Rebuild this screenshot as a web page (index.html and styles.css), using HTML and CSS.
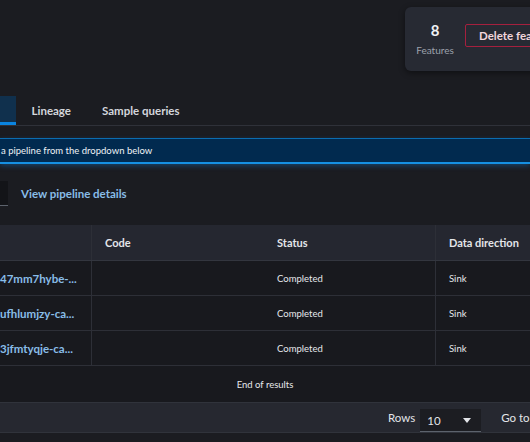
FILE: index.html
```html
<!DOCTYPE html>
<html>
<head>
<meta charset="utf-8">
<link rel="stylesheet" href="styles.css">
</head>
<body>
<div class="page">
  <div class="top">
    <div class="stats">
      <div class="count">
        <div class="num">8</div>
        <div class="lbl">Features</div>
      </div>
      <button class="danger">Delete feature group</button>
    </div>
  </div>

  <div class="tabs">
    <div class="tab active"></div>
    <div class="tab">Lineage</div>
    <div class="tab">Sample queries</div>
  </div>

  <div class="banner"><span>a pipeline from the dropdown below</span></div>

  <div class="picker">
    <div class="select-stub"></div>
    <a class="link">View pipeline details</a>
  </div>

  <div class="table">
    <div class="row head">
      <div class="cell c1"></div>
      <div class="cell c2">Code</div>
      <div class="cell c3">Status</div>
      <div class="cell c4">Data direction</div>
    </div>
    <div class="row">
      <div class="cell c1"><a class="link clip">47mm7hybe-...</a></div>
      <div class="cell c2"></div>
      <div class="cell c3">Completed</div>
      <div class="cell c4">Sink</div>
    </div>
    <div class="row">
      <div class="cell c1"><a class="link clip">ufhlumjzy-ca...</a></div>
      <div class="cell c2"></div>
      <div class="cell c3">Completed</div>
      <div class="cell c4">Sink</div>
    </div>
    <div class="row">
      <div class="cell c1"><a class="link clip">3jfmtyqje-ca...</a></div>
      <div class="cell c2"></div>
      <div class="cell c3">Completed</div>
      <div class="cell c4">Sink</div>
    </div>
    <div class="end">End of results</div>
  </div>

  <div class="footer">
    <span class="rows-label">Rows</span>
    <div class="rows-select"><span>10</span><span class="caret"></span></div>
    <span class="goto">Go to</span>
  </div>
</div>
</body>
</html>
```
FILE: styles.css
```css
* { box-sizing: border-box; }
html, body {
  margin: 0;
  padding: 0;
  background: #1b1c21;
  width: 530px;
  height: 442px;
  overflow: hidden;
}
body {
  font-family: Lato, "Open Sans", "Liberation Sans", sans-serif;
  color: #dfe2e7;
}
.page {
  width: 530px;
}
.top {
  height: 96px;
  padding-top: 7px;
  display: flex;
  justify-content: flex-end;
}
.stats {
  width: 185px;
  flex: none;
  margin-right: -60px;
  height: 64px;
  background: #272a33;
  border-radius: 6px;
  box-shadow: 0 2px 6px rgba(0,0,0,0.45);
  display: flex;
  align-items: center;
  overflow: hidden;
}
.count {
  flex: none;
  width: 60px;
  text-align: center;
  margin-top: -2px;
}
.num {
  font-weight: 700;
  font-size: 15px;
  color: #f0f1f4;
  line-height: 18px;
}
.lbl {
  font-size: 10px;
  color: #9ca1ab;
  margin-top: 5px;
}
.danger {
  flex: none;
  height: 23px;
  margin-top: -7px;
  background: transparent;
  border: 1px solid #a5203e;
  border-radius: 2px;
  color: #f1d6dc;
  font-family: inherit;
  font-weight: 700;
  font-size: 11.5px;
  padding: 0 13px;
  white-space: nowrap;
}
.tabs {
  height: 30px;
  display: flex;
  border-bottom: 1px solid #2f3139;
}
.tab {
  height: 29px;
  padding: 0 15.5px;
  display: flex;
  align-items: center;
  font-weight: 700;
  font-size: 11.5px;
  color: #d3d6dc;
  white-space: nowrap;
}
.tab.active {
  width: 16px;
  padding: 0;
  background: #10304d;
  border-bottom: 3px solid #0a84e0;
}
.banner {
  margin-top: 12px;
  height: 26px;
  background: #012a4f;
  border-top: 1px solid #0b6cb0;
  border-bottom: 2px solid #1690e2;
  box-shadow: 0 2px 5px rgba(20,130,220,0.35);
  display: flex;
  align-items: center;
  font-size: 9.5px;
  color: #eef2f6;
  padding-left: 1px;
}
.picker {
  margin-top: 17px;
  height: 25px;
  display: flex;
  align-items: center;
}
.select-stub {
  width: 8px;
  height: 25px;
  background: #131418;
  border-bottom: 1px solid #5c626c;
}
.link {
  color: #89bde8;
  font-weight: 700;
  font-size: 11.5px;
  margin-left: 13px;
}
.table {
  margin-top: 19px;
}
.row {
  display: grid;
  grid-template-columns: 92px 172px 172px 120px;
  height: 35px;
  background: #18191e;
  border-bottom: 1px solid #2d2f37;
}
.row.head {
  height: 36px;
  background: #252730;
  border-bottom: 1px solid #33363f;
}
.cell {
  display: flex;
  align-items: center;
  padding-left: 13px;
  font-size: 9.5px;
  color: #e6e8ec;
  white-space: nowrap;
  border-right: 1px solid #2d2f37;
}
.cell.c2 { border-right-color: transparent; }
.head .cell {
  font-weight: 700;
  font-size: 11px;
  color: #e3e5e9;
}
.c1 { padding-left: 0; }
.link.clip { margin-left: 0; font-size: 11.5px; }
.end {
  height: 36px;
  background: #18191e;
  display: flex;
  align-items: center;
  justify-content: center;
  font-size: 9.5px;
  color: #e6e8ec;
}
.footer {
  height: 31px;
  background: #262830;
  border-top: 1px solid #30333b;
  border-bottom: 1px solid #30333b;
  display: flex;
  align-items: center;
  padding-left: 388px;
  font-size: 11.5px;
  color: #e3e5e9;
  white-space: nowrap;
}
.rows-select {
  margin-left: 5px;
  width: 61px;
  height: 23px;
  margin-top: 6px;
  background: #1c1d22;
  border-bottom: 1px solid #5c626c;
  display: flex;
  align-items: center;
  justify-content: space-between;
  padding: 0 10px 0 7px;
}
.caret {
  width: 0;
  height: 0;
  border-left: 4px solid transparent;
  border-right: 4px solid transparent;
  border-top: 5px solid #e3e5e9;
}
.goto { margin-left: 20px; }
```
